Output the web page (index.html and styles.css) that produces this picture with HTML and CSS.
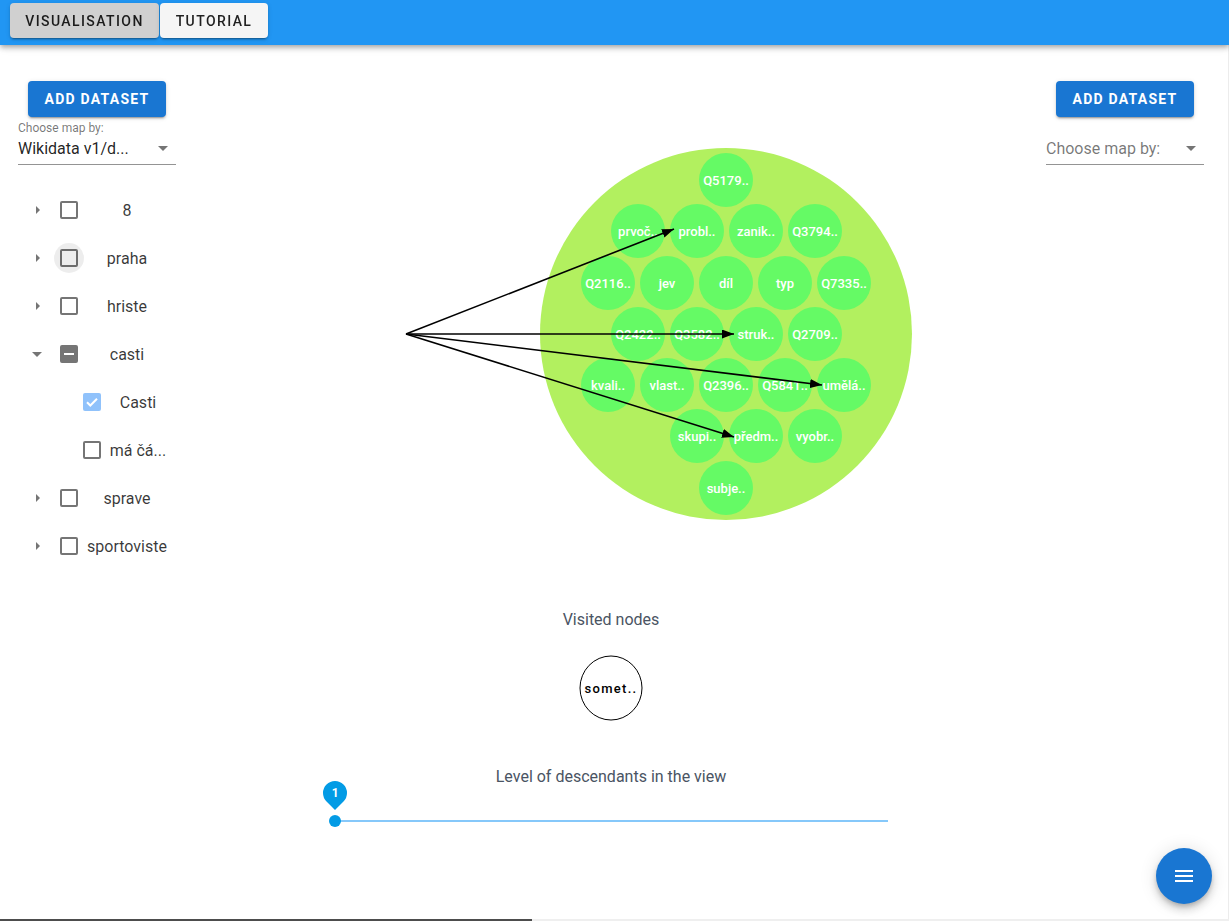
FILE: index.html
```html
<!DOCTYPE html>
<html lang="en">
<head>
<meta charset="utf-8">
<title>Visualisation</title>
<link rel="stylesheet" href="styles.css">
</head>
<body>
<header class="appbar">
  <button class="tab tab-active">VISUALISATION</button>
  <button class="tab tab-tutorial">TUTORIAL</button>
</header>
<main class="layout">
  <aside class="side side-left">
    <button class="btn-primary">ADD DATASET</button>
    <div class="field-label">Choose map by:</div>
    <div class="select"><span class="select-value">Wikidata v1/d...</span><span class="caret-down"></span></div>
    <ul class="tree">
      <li class="row"><span class="toggle toggle-right"></span><span class="cb"></span><span class="label">8</span></li>
      <li class="row"><span class="toggle toggle-right"></span><span class="cb cb-hover"></span><span class="label">praha</span></li>
      <li class="row"><span class="toggle toggle-right"></span><span class="cb"></span><span class="label">hriste</span></li>
      <li class="row"><span class="toggle toggle-down"></span><span class="cb cb-indet"></span><span class="label">casti</span></li>
      <li class="row row-child"><span class="toggle"></span><span class="cb cb-checked"><svg viewBox="0 0 18 18" width="18" height="18"><path d="M4 9.3l3.3 3.2L14 5.8" fill="none" stroke="#fff" stroke-width="2"/></svg></span><span class="label label-child">Casti</span></li>
      <li class="row row-child"><span class="toggle"></span><span class="cb"></span><span class="label label-child">má čá...</span></li>
      <li class="row"><span class="toggle toggle-right"></span><span class="cb"></span><span class="label">sprave</span></li>
      <li class="row"><span class="toggle toggle-right"></span><span class="cb"></span><span class="label">sportoviste</span></li>
    </ul>
  </aside>

  <section class="center">
    <svg class="graph" width="822" height="480" viewBox="0 0 822 480">
      <defs>
        <marker id="arrow" markerUnits="userSpaceOnUse" markerWidth="12" markerHeight="9" refX="12" refY="4.5" orient="auto">
          <path d="M0,0 L12,4.5 L0,9 z" fill="#000"/>
        </marker>
      </defs>
      <g transform="translate(-200 -81)">
        <circle cx="726" cy="334" r="186" fill="#b2f05f"/>
        <g class="nodes">
          <circle cx="726" cy="180" r="27"/>
          <circle cx="638" cy="231" r="27"/><circle cx="697" cy="231" r="27"/><circle cx="756" cy="231" r="27"/><circle cx="815" cy="231" r="27"/>
          <circle cx="608" cy="283" r="27"/><circle cx="667" cy="283" r="27"/><circle cx="726" cy="283" r="27"/><circle cx="785" cy="283" r="27"/><circle cx="844" cy="283" r="27"/>
          <circle cx="638" cy="334" r="27"/><circle cx="697" cy="334" r="27"/><circle cx="756" cy="334" r="27"/><circle cx="815" cy="334" r="27"/>
          <circle cx="608" cy="385" r="27"/><circle cx="667" cy="385" r="27"/><circle cx="726" cy="385" r="27"/><circle cx="785" cy="385" r="27"/><circle cx="844" cy="385" r="27"/>
          <circle cx="697" cy="436" r="27"/><circle cx="756" cy="436" r="27"/><circle cx="815" cy="436" r="27"/>
          <circle cx="726" cy="488" r="27"/>
        </g>
        <g class="node-text">
          <text x="726" y="180">Q5179..</text>
          <text x="638" y="231">prvoč..</text><text x="697" y="231">probl..</text><text x="756" y="231">zanik..</text><text x="815" y="231">Q3794..</text>
          <text x="608" y="283">Q2116..</text><text x="667" y="283">jev</text><text x="726" y="283">díl</text><text x="785" y="283">typ</text><text x="844" y="283">Q7335..</text>
          <text x="638" y="334">Q2422..</text><text x="697" y="334">Q3582..</text><text x="756" y="334">struk..</text><text x="815" y="334">Q2709..</text>
          <text x="608" y="385">kvali..</text><text x="667" y="385">vlast..</text><text x="726" y="385">Q2396..</text><text x="785" y="385">Q5841..</text><text x="844" y="385">umělá..</text>
          <text x="697" y="436">skupi..</text><text x="756" y="436">předm..</text><text x="815" y="436">vyobr..</text>
          <text x="726" y="488">subje..</text>
        </g>
        <g class="edges">
          <line x1="406" y1="334" x2="674" y2="229" marker-end="url(#arrow)"/>
          <line x1="406" y1="334" x2="734" y2="334" marker-end="url(#arrow)"/>
          <line x1="406" y1="334" x2="822" y2="385" marker-end="url(#arrow)"/>
          <line x1="406" y1="334" x2="734" y2="437" marker-end="url(#arrow)"/>
        </g>
      </g>
    </svg>

    <div class="caption caption-visited">Visited nodes</div>
    <svg class="visited" width="70" height="70" viewBox="0 0 70 70">
      <ellipse cx="35" cy="35" rx="31" ry="32" fill="#fff" stroke="#000" stroke-width="1"/>
      <text x="35" y="35" class="visited-text">somet..</text>
    </svg>

    <div class="caption caption-level">Level of descendants in the view</div>
    <div class="slider">
      <div class="slider-rail"></div>
      <div class="slider-thumb">
        <div class="slider-pin"><span class="slider-pin-value">1</span></div>
      </div>
    </div>
  </section>

  <aside class="side side-right">
    <button class="btn-primary">ADD DATASET</button>
    <div class="select select-right"><span class="select-placeholder">Choose map by:</span><span class="caret-down"></span></div>
  </aside>
</main>

<button class="fab" aria-label="menu">
  <svg viewBox="0 0 24 24" width="24" height="24"><path d="M3 18h18v-2H3v2zm0-5h18v-2H3v2zm0-7v2h18V6H3z" fill="#fff"/></svg>
</button>

<div class="hscroll"><div class="hscroll-thumb"></div></div>
<div class="vscroll"></div>
</body>
</html>
```
FILE: styles.css
```css
* { box-sizing: border-box; }
html, body { margin: 0; padding: 0; }
body {
  font-family: Roboto, "Liberation Sans", Arial, sans-serif;
  color: rgba(0,0,0,0.87);
  background: #fff;
  width: 1229px;
  min-height: 921px;
  overflow: hidden;
}
button { font-family: inherit; }

.appbar {
  height: 45px;
  background: #2196f3;
  display: flex;
  align-items: flex-start;
  padding: 3px 0 0 10px;
  gap: 1px;
  box-shadow: 0 2px 4px -1px rgba(0,0,0,0.2), 0 4px 5px 0 rgba(0,0,0,0.14), 0 1px 10px 0 rgba(0,0,0,0.12);
  position: relative;
  z-index: 2;
}
.tab {
  height: 35px;
  border: 0;
  border-radius: 4px;
  background: #f5f5f5;
  color: rgba(0,0,0,0.87);
  font-size: 14px;
  font-weight: 500;
  letter-spacing: 1.4px;
  padding: 0;
  box-shadow: 0 3px 1px -2px rgba(0,0,0,0.2), 0 2px 2px 0 rgba(0,0,0,0.14), 0 1px 5px 0 rgba(0,0,0,0.12);
}
.tab-active { background: #d0d0d0; width: 149px; }
.tab-tutorial { width: 108px; }

.layout {
  display: grid;
  grid-template-columns: 200px 822px 1fr;
  padding-top: 36px;
}

.side { display: flex; flex-direction: column; align-items: flex-start; }
.side-left { padding-left: 18px; }
.side-right { padding-left: 24px; }
.side-left .btn-primary { margin-left: 10px; }
.side-right .btn-primary { margin-left: 10px; }

.btn-primary {
  height: 36px;
  width: 138px;
  border: 0;
  border-radius: 4px;
  background: #1976d2;
  color: #fff;
  font-size: 14px;
  font-weight: 700;
  letter-spacing: 1.25px;
  padding: 0;
  box-shadow: 0 3px 1px -2px rgba(0,0,0,0.2), 0 2px 2px 0 rgba(0,0,0,0.14), 0 1px 5px 0 rgba(0,0,0,0.12);
}

.field-label {
  margin-top: 4px;
  font-size: 12px;
  line-height: 14px;
  color: rgba(0,0,0,0.54);
}
.select {
  width: 158px;
  height: 28px;
  padding: 2px 0 6px 0;
  border-bottom: 1px solid rgba(0,0,0,0.42);
  display: flex;
  align-items: center;
  justify-content: space-between;
  font-size: 16px;
  line-height: 19px;
  margin-top: 2px;
}
.select-right { margin-top: 20px; }
.select-placeholder { color: rgba(0,0,0,0.54); }
.caret-down {
  width: 0; height: 0;
  border-left: 5px solid transparent;
  border-right: 5px solid transparent;
  border-top: 5px solid rgba(0,0,0,0.54);
  margin-right: 8px;
}

.tree { list-style: none; margin: 21px 0 0 -18px; padding: 0; }
.row { height: 48px; display: flex; align-items: center; padding-left: 28px; }
.row-child { padding-left: 51px; }
.toggle { width: 18px; height: 18px; display: flex; align-items: center; justify-content: center; }
.toggle-right::before {
  content: ""; width: 0; height: 0;
  border-top: 4px solid transparent;
  border-bottom: 4px solid transparent;
  border-left: 4px solid rgba(0,0,0,0.54);
  margin-left: 2px;
}
.toggle-down::before {
  content: ""; width: 0; height: 0;
  border-left: 5px solid transparent;
  border-right: 5px solid transparent;
  border-top: 5px solid rgba(0,0,0,0.54);
}
.cb {
  width: 18px; height: 18px;
  margin-left: 14px;
  border: 2px solid rgba(0,0,0,0.54);
  border-radius: 2px;
  position: relative;
  display: flex; align-items: center; justify-content: center;
}
.cb-hover::before {
  content: "";
  position: absolute;
  left: -8px; top: -8px;
  width: 30px; height: 30px;
  border-radius: 50%;
  background: rgba(0,0,0,0.07);
}
.cb-indet { background: #757575; border-color: #757575; }
.cb-indet::after { content: ""; width: 10px; height: 2px; background: #fff; }
.cb-checked { background: #90c2fb; border: 0; }
.label { width: 82px; margin-left: 8px; text-align: center; font-size: 16px; color: rgba(0,0,0,0.78); white-space: nowrap; }
.label-child { width: 58px; }

.center { display: flex; flex-direction: column; align-items: center; }
.graph { display: block; }
.nodes circle { fill: #65fa65; }
.node-text text {
  fill: #fff;
  font-size: 13px;
  font-weight: 500;
  text-anchor: middle;
  dominant-baseline: central;
}
.edges line { stroke: #000; stroke-width: 1.6; }

.caption { font-size: 16px; line-height: 19px; color: #4a5463; }
.caption-visited { margin-top: 49px; }
.visited { display: block; margin-top: 24px; }
.visited-text { font-size: 13px; font-weight: 500; letter-spacing: 1.3px; text-anchor: middle; dominant-baseline: central; fill: #000; }
.caption-level { margin-top: 44px; }

.slider { position: relative; width: 553px; height: 50px; margin-top: 3px; }
.slider-rail { position: absolute; left: 0; right: 0; top: 31px; height: 2px; background: #86c8fa; }
.slider-thumb {
  position: absolute; left: -6px; top: 26px;
  width: 12px; height: 12px; border-radius: 50%;
  background: #039be5;
}
.slider-pin {
  position: absolute;
  left: -6px; top: -34px;
  width: 24px; height: 24px;
  border-radius: 50% 50% 50% 0;
  background: #039be5;
  transform: rotate(-45deg);
  display: flex; align-items: center; justify-content: center;
}
.slider-pin-value { transform: rotate(45deg); color: #fff; font-size: 12px; font-weight: 700; }

.fab {
  position: fixed;
  left: 1156px; top: 848px;
  width: 56px; height: 56px;
  border-radius: 50%;
  border: 0;
  background: #1976d2;
  display: flex; align-items: center; justify-content: center;
  padding: 0;
  box-shadow: 0 3px 5px -1px rgba(0,0,0,0.2), 0 6px 10px 0 rgba(0,0,0,0.14), 0 1px 18px 0 rgba(0,0,0,0.12);
}

.hscroll { position: fixed; left: 0; bottom: 0; width: 1229px; height: 2px; background: #efefef; }
.hscroll-thumb { width: 532px; height: 2px; background: #4d4d4d; }
.vscroll { position: fixed; right: 0; top: 45px; bottom: 2px; width: 1px; background: #ececec; }
```
